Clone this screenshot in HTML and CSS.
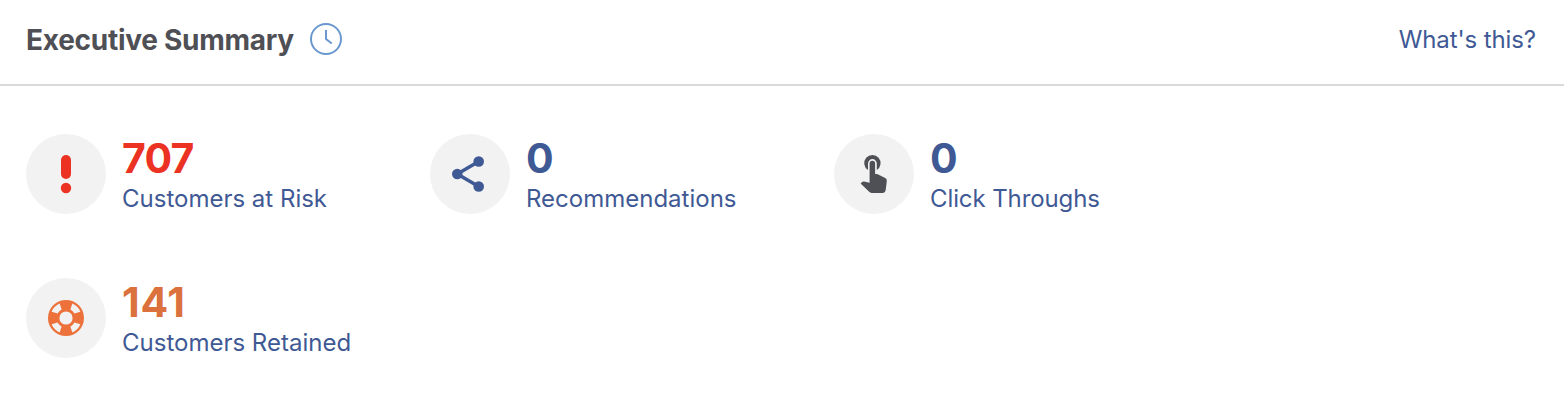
FILE: index.html
```html
<!DOCTYPE html>
<html lang="en">
<head>
    <meta charset="UTF-8">
    <meta name="viewport" content="width=device-width, initial-scale=1.0">
    <title>Executive Summary</title>
    <link rel="stylesheet" href="styles.css">
</head>
<body>
    <header class="summary-header">
        <h1>Executive Summary</h1>
        <svg class="clock" viewBox="0 0 32 32">
            <circle cx="16" cy="16" r="15"/>
            <path d="M16 7V16L21.800 20.500"/>
        </svg>
        <a class="help-link" href="#">What's this?</a>
    </header>

    <!-- Summary numbers -->
    <main class="stats">
        <div class="stat risk">
            <div class="stat-icon">
                <svg viewBox="0 0 80 80">
                    <rect x="35" y="21" width="10" height="24" rx="5"/>
                    <circle cx="40" cy="54" r="5.200"/>
                </svg>
            </div>
            <div class="stat-text">
                <div class="number">707</div>
                <a class="label" href="#">Customers at Risk</a>
            </div>
        </div>
        <div class="stat">
            <div class="stat-icon">
                <svg viewBox="0 0 80 80">
                    <path class="line" d="M48.700 27.500L27.300 40L48.700 52.500"/>
                    <circle cx="48.700" cy="27.500" r="5.300"/>
                    <circle cx="27.300" cy="40" r="5.300"/>
                    <circle cx="48.700" cy="52.500" r="5.300"/>
                </svg>
            </div>
            <div class="stat-text">
                <div class="number">0</div>
                <a class="label" href="#">Recommendations</a>
            </div>
        </div>
        <div class="stat clicks">
            <div class="stat-icon">
                <svg viewBox="0 0 80 80">
                    <path d="M34 36V29.500a4.400 4.400 0 0 1 8.800 0V36a8.200 8.200 0 1 0-8.800 0z"/>
                    <path d="M35.600 29.500a2.750 2.750 0 0 1 5.500 0V40h1.400q.6 0 1.200.3l7.500 3.800q1.900 1 1.600 3.200l-1.200 9.200q-.4 2.400-2.700 2.400H37.500q-1.200 0-2.100-.8L26.600 49.500l1.300-1.300q.9-.9 2.200-.6l5.500 1.200z"/>
                </svg>
            </div>
            <div class="stat-text">
                <div class="number">0</div>
                <a class="label" href="#">Click Throughs</a>
            </div>
        </div>
        <div class="stat retained">
            <div class="stat-icon">
                <svg viewBox="0 0 80 80">
                    <circle cx="40" cy="40" r="18"/>
                    <circle class="hole" cx="40" cy="40" r="6.600"/>
                    <path class="hole" d="M33.700 25.600L35.600 31.600Q33 33 31.600 35.600L25.600 33.700Q28 28 33.700 25.600z"/>
                    <path class="hole" d="M46.300 25.600L44.400 31.600Q47 33 48.400 35.600L54.400 33.700Q52 28 46.300 25.600z"/>
                    <path class="hole" d="M33.700 54.400L35.600 48.400Q33 47 31.600 44.400L25.600 46.300Q28 52 33.700 54.400z"/>
                    <path class="hole" d="M46.300 54.400L44.400 48.400Q47 47 48.400 44.400L54.400 46.300Q52 52 46.300 54.400z"/>
                </svg>
            </div>
            <div class="stat-text">
                <div class="number">141</div>
                <a class="label" href="#">Customers Retained</a>
            </div>
        </div>
    </main>
</body>
</html>
```
FILE: styles.css
```css
* {
    box-sizing: border-box;
}
body {
    margin: 0;
    background-color: #fff;
    font-family: Inter, sans-serif;
    color: #4f5056;
}
a {
    color: #3f5995;
    text-decoration: none;
}
.summary-header {
    display: flex;
    align-items: center;
    height: 86px;
    padding: 0 28px 6px 26px;
    border-bottom: 2px solid #dadada;
}
h1 {
    margin: 0;
    padding-top: 2px;
    font-size: 28px;
    font-weight: 700;
    line-height: 36px;
    letter-spacing: -0.27px;
}
.clock {
    width: 32px;
    height: 32px;
    margin-left: 16px;
    fill: none;
    stroke: #6b98cf;
    stroke-width: 2;
}
.help-link {
    margin-left: auto;
    padding-top: 1px;
    font-size: 24px;
    letter-spacing: -0.1px;
}
.stats {
    display: grid;
    grid-template-columns: repeat(3, 404px);
    row-gap: 64px;
    padding: 48px 26px;
}
.stat {
    display: flex;
    gap: 16px;
    height: 80px;
    color: #3f5995;
}
.stat-icon {
    width: 80px;
    height: 80px;
    border-radius: 50%;
    background-color: #f2f2f2;
}
.stat-icon svg {
    display: block;
    fill: currentColor;
    stroke: none;
}
.number {
    font-size: 41px;
    font-weight: 700;
    line-height: 49px;
    letter-spacing: -0.8px;
}
.label {
    display: block;
    font-size: 24px;
    line-height: 32px;
}
.clicks .label {
    letter-spacing: -0.1px;
}
.risk .stat-icon,
.risk .number {
    color: #ec3323;
}
.clicks .stat-icon {
    color: #4f5056;
}
.retained .stat-icon {
    color: #ed713b;
}
.retained .number {
    color: #db713c;
    letter-spacing: 0.7px;
}
.stat-icon .line {
    fill: none;
    stroke: currentColor;
    stroke-width: 3.500;
}
.stat-icon .hole {
    fill: #f2f2f2;
}
```
